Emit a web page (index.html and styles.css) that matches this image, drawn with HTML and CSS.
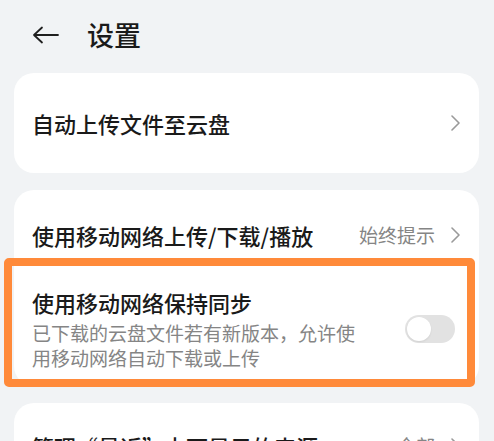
FILE: index.html
```html
<!DOCTYPE html>
<html lang="zh-CN">
<head>
<meta charset="utf-8">
<link rel="stylesheet" href="styles.css">
</head>
<body>
<div class="page">
  <header class="topbar">
    <svg class="back" width="27" height="18" viewBox="0 0 27 18"><path d="M10 1.5 L2 9 L10 16.5 M2 9 H26" fill="none" stroke="#1f1f1f" stroke-width="1.8" stroke-linecap="round" stroke-linejoin="round"/></svg>
    <h1 class="title">设置</h1>
  </header>

  <section class="card">
    <div class="row row-single">
      <span class="label">自动上传文件至云盘</span>
      <svg class="chev" width="9" height="16" viewBox="0 0 9 16"><path d="M1 1 L8 8 L1 15" fill="none" stroke="#9a9a9a" stroke-width="1.6" stroke-linecap="round" stroke-linejoin="round"/></svg>
    </div>
  </section>

  <section class="card card-group">
    <div class="row row-first">
      <span class="label">使用移动网络上传/下载/播放</span>
      <span class="value">始终提示</span>
      <svg class="chev" width="9" height="16" viewBox="0 0 9 16"><path d="M1 1 L8 8 L1 15" fill="none" stroke="#9a9a9a" stroke-width="1.6" stroke-linecap="round" stroke-linejoin="round"/></svg>
    </div>
    <div class="row row-sync">
      <div class="textcol">
        <div class="label">使用移动网络保持同步</div>
        <div class="sub">已下载的云盘文件若有新版本，允许使用移动网络自动下载或上传</div>
      </div>
      <div class="toggle"><span class="knob"></span></div>
    </div>
    <div class="highlight"></div>
  </section>

  <section class="card">
    <div class="row row-last">
      <span class="label">管理“最近”中可显示的来源</span>
      <span class="value">全部</span>
      <svg class="chev" width="9" height="16" viewBox="0 0 9 16"><path d="M1 1 L8 8 L1 15" fill="none" stroke="#9a9a9a" stroke-width="1.6" stroke-linecap="round" stroke-linejoin="round"/></svg>
    </div>
  </section>
</div>
</body>
</html>
```

FILE: styles.css
```css
html, body {
  margin: 0;
  padding: 0;
  overflow: hidden;
  background: #f1f3f5;
}
body {
  font-family: "Noto Sans CJK SC", "Noto Sans", sans-serif;
  color: #1a1a1a;
}
.page {
  width: 494px;
  height: 441px;
  overflow: hidden;
}
.topbar {
  height: 73px;
  display: flex;
  align-items: center;
  padding-left: 32px;
  box-sizing: border-box;
  padding-bottom: 3px;
}
.back {
  display: block;
}
.title {
  margin: 0 0 0 28px;
  font-size: 27px;
  font-weight: 500;
  line-height: 34px;
  color: #1a1a1a;
}
.card {
  margin: 0 15px 17px 14px;
  background: #ffffff;
  border-radius: 20px;
  position: relative;
}
.row {
  display: flex;
  align-items: center;
  padding: 0 19px 0 18px;
}
.row-single {
  height: 100px;
}
.row-first {
  height: 90px;
}
.row-last {
  height: 86px;
}
.label {
  font-size: 22px;
  line-height: 30px;
  font-weight: 500;
  color: #1a1a1a;
  flex: 1;
}
.value {
  font-size: 19px;
  line-height: 26px;
  color: #858585;
  margin-right: 16px;
}
.chev {
  display: block;
  flex: none;
}
.row-sync {
  padding-top: 7px;
  padding-bottom: 16px;
  padding-right: 24px;
  align-items: center;
}
.textcol {
  flex: 1;
  margin-right: 43px;
}
.row-sync .label {
  flex: none;
}
.sub {
  font-size: 19px;
  line-height: 25px;
  color: #858585;
  margin-top: 3px;
}
.toggle {
  width: 50px;
  height: 28px;
  border-radius: 14px;
  background: #e2e2e2;
  flex: none;
  display: flex;
  align-items: center;
  padding: 0 2px;
  box-sizing: border-box;
}
.knob {
  width: 24px;
  height: 24px;
  border-radius: 50%;
  background: #ffffff;
  box-shadow: 0 1px 2px rgba(0,0,0,0.08);
}
.highlight {
  position: absolute;
  left: -10px;
  right: 4px;
  top: 68px;
  height: 129px;
  box-sizing: border-box;
  border: 8px solid #ff8a3a;
  border-radius: 5px;
  pointer-events: none;
}
```
